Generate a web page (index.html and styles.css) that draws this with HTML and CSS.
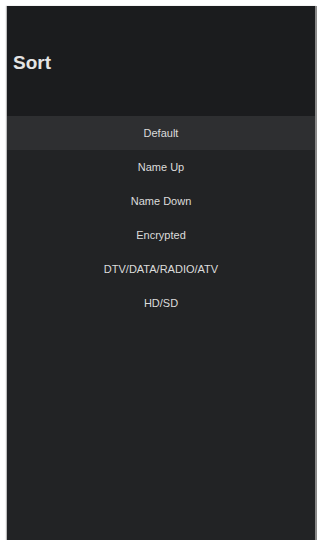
FILE: index.html
```html
<!DOCTYPE html>
<html>
<head>
<meta charset="utf-8">
<link rel="stylesheet" href="styles.css">
</head>
<body>
<div class="panel">
  <header class="header">
    <h1 class="title">Sort</h1>
  </header>
  <ul class="list">
    <li class="item active">Default</li>
    <li class="item">Name Up</li>
    <li class="item">Name Down</li>
    <li class="item">Encrypted</li>
    <li class="item">DTV/DATA/RADIO/ATV</li>
    <li class="item">HD/SD</li>
  </ul>
</div>
</body>
</html>
```
FILE: styles.css
```css
html, body {
  margin: 0;
  padding: 0;
  background: #ffffff;
  height: 100%;
}
body {
  font-family: "Liberation Sans", Arial, sans-serif;
  padding: 6px 5px 0 7px;
  box-sizing: border-box;
  overflow: hidden;
}
.panel {
  width: 308px;
  height: 540px;
  background: #222325;
  border-right: 2px solid #8a8a8a;
  box-shadow: -1px 0 1px #bbb;
  display: flex;
  flex-direction: column;
}
.header {
  height: 110px;
  background: #1b1c1e;
  display: flex;
  align-items: center;
  padding-left: 6px;
}
.title {
  margin: 0;
  font-size: 19px;
  font-weight: bold;
  color: #e4e4e4;
  position: relative;
  top: 2px;
}
.list {
  list-style: none;
  margin: 0;
  padding: 0;
}
.item {
  height: 34px;
  line-height: 34px;
  text-align: center;
  font-size: 11px;
  color: #dcdcdc;
}
.item.active {
  background: #2e2f31;
}
```
